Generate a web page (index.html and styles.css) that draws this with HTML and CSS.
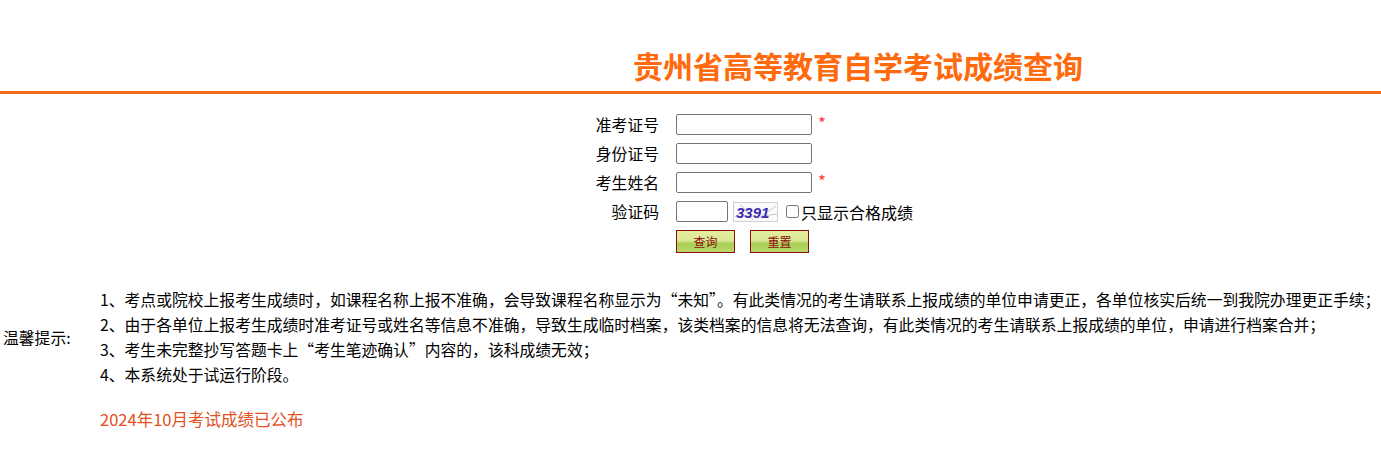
FILE: index.html
```html
<!DOCTYPE html>
<html lang="zh-CN">
<head>
<meta charset="utf-8">
<title>贵州省高等教育自学考试成绩查询</title>
<link rel="stylesheet" href="styles.css">
</head>
<body>
<header class="header">
  <h1 class="title">贵州省高等教育自学考试成绩查询</h1>
</header>
<form class="query">
  <div class="row">
    <label class="lbl">准考证号</label>
    <input class="ipt" type="text">
    <span class="req">*</span>
  </div>
  <div class="row">
    <label class="lbl">身份证号</label>
    <input class="ipt" type="text">
  </div>
  <div class="row">
    <label class="lbl">考生姓名</label>
    <input class="ipt" type="text">
    <span class="req">*</span>
  </div>
  <div class="row">
    <label class="lbl">验证码</label>
    <input class="ipt short" type="text">
    <span class="captcha">
      <svg width="45" height="20" viewBox="0 0 45 20">
        <rect x="0.5" y="0.5" width="44" height="19" fill="#fbfbfb" stroke="#cfcfcf"/>
        <path d="M2 15 L14 6 M24 17 L43 4 M30 14 L44 12 M8 3 L20 18" stroke="#bbb" stroke-width="0.8" fill="none"/>
        <text x="3" y="15.5" font-family="Liberation Sans, sans-serif" font-size="15" font-weight="bold" font-style="italic" fill="#3a2bb0">3391</text>
      </svg>
    </span>
    <label class="chk"><input type="checkbox" class="cb">只显示合格成绩</label>
  </div>
  <div class="row btns">
    <span class="lbl"></span>
    <button type="button" class="btn">查询</button>
    <button type="button" class="btn">重置</button>
  </div>
</form>
<section class="notice">
  <div class="ntitle">温馨提示:</div>
  <ol class="nlist">
    <li>1、考点或院校上报考生成绩时，如课程名称上报不准确，会导致课程名称显示为“未知”。有此类情况的考生请联系上报成绩的单位申请更正，各单位核实后统一到我院办理更正手续；</li>
    <li>2、由于各单位上报考生成绩时准考证号或姓名等信息不准确，导致生成临时档案，该类档案的信息将无法查询，有此类情况的考生请联系上报成绩的单位，申请进行档案合并；</li>
    <li>3、考生未完整抄写答题卡上“考生笔迹确认”内容的，该科成绩无效；</li>
    <li>4、本系统处于试运行阶段。</li>
  </ol>
</section>
<p class="announce">2024年10月考试成绩已公布</p>
</body>
</html>
```
FILE: styles.css
```css
body {
  margin: 0;
  font-family: "Noto Sans CJK SC", "Noto Sans", sans-serif;
  font-size: 16px;
  color: #000;
  background: #fff;
}
.header {
  height: 91px;
  border-bottom: 3px solid #f26a1b;
  display: flex;
  align-items: flex-start;
}
.title {
  margin: 43px 0 0 633px;
  font-size: 30px;
  line-height: 44px;
  font-weight: bold;
  color: #ff6a0c;
}
.query {
  margin-top: 20px;
  display: flex;
  flex-direction: column;
  gap: 8px;
}
.row {
  display: flex;
  align-items: center;
  height: 21px;
}
.lbl {
  width: 676px;
  text-align: right;
  padding-right: 17px;
  box-sizing: border-box;
  line-height: 21px;
  font-size: 15.8px;
}
.ipt {
  width: 136px;
  height: 21px;
  box-sizing: border-box;
  border: 1px solid #767676;
  border-radius: 2px;
  padding: 0 2px;
  margin: 0;
  font-size: 13px;
}
.ipt.short {
  width: 52px;
}
.req {
  color: #ff3b3b;
  margin-left: 6px;
  font-size: 17px;
  align-self: flex-start;
  line-height: 18px;
}
.captcha {
  display: inline-flex;
  margin-left: 5px;
}
.chk {
  display: inline-flex;
  align-items: center;
  margin-left: 3px;
  font-size: 16px;
}
.cb {
  width: 13px;
  height: 13px;
  margin: 0 2px 0 5px;
}
.btns {
  height: 23px;
}
.btn {
  width: 59px;
  height: 23px;
  box-sizing: border-box;
  border: 1px solid #8b0a0a;
  background: linear-gradient(#e5ee9f 0%, #dbe996 45%, #a8cf55 60%, #b9d96b 100%);
  color: #8b0a0a;
  font-family: inherit;
  font-size: 12px;
  padding: 0;
  margin-right: 15px;
  line-height: 21px;
}
.notice {
  margin-top: 34px;
  display: flex;
  align-items: center;
}
.ntitle {
  width: 100px;
  padding-left: 3px;
  box-sizing: border-box;
  font-size: 15.8px;
}
.nlist {
  list-style: none;
  margin: 0;
  padding: 0;
  font-size: 15.8px;
  line-height: 25px;
  white-space: nowrap;
}
.announce {
  margin: 20px 0 0 100px;
  color: #e2501e;
  font-size: 16.5px;
}
```
